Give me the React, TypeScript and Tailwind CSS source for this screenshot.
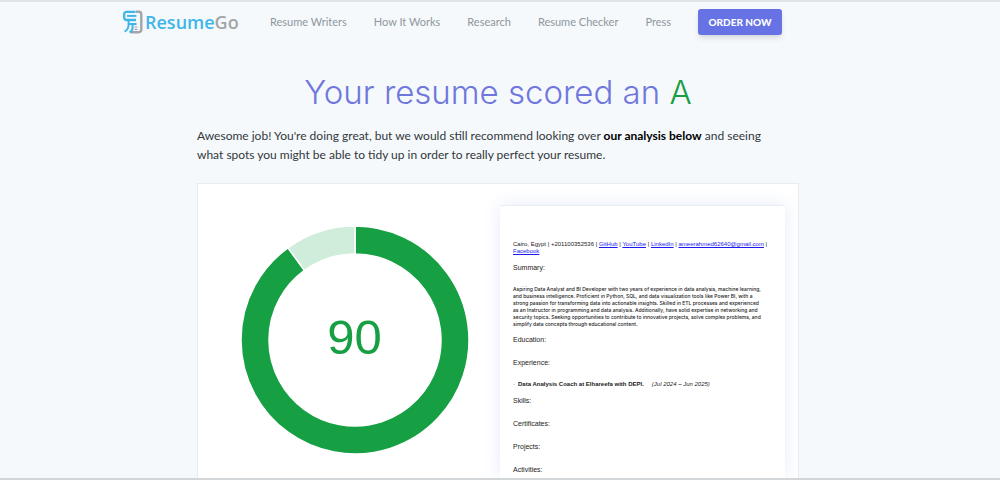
import { ReactNode } from "react";

const navLinks = ["Resume Writers", "How It Works", "Research", "Resume Checker", "Press"];

const contactLinks = ["GitHub", "YouTube", "LinkedIn", "ameerahmed62640@gmail.com", "Facebook"];

function LogoMark() {
  return (
    <svg viewBox="0 0 20 24" className="h-6 w-5" fill="none" aria-hidden="true">
      <path d="M13 1.8h2.7a2.6 2.6 0 0 1 2.6 2.6v15.2a2.6 2.6 0 0 1-2.6 2.6H7.8" stroke="#a3a5a8" strokeWidth="2.4" />
      <path d="M11.5 17h3M11.5 19.4h3" stroke="#a3a5a8" strokeWidth="1.2" />
      <path d="M12.6 1.8H3.4A2.2 2.2 0 0 0 1.2 4v3.8A2.2 2.2 0 0 0 3.4 10H13" stroke="#3fb6e8" strokeWidth="2.3" />
      <path d="M4 5.9h9.4" stroke="#3fb6e8" strokeWidth="2" />
      <path d="M5.6 10v4.4c0 3.6-1.2 5.6-4 7.2M5.6 14h8M9.6 14v3.4c0 2.4-1 4-3.2 5" stroke="#3fb6e8" strokeWidth="2" />
    </svg>
  );
}

function Header() {
  return (
    <header className="mx-auto flex w-full max-w-[750px] items-center pt-[7px]">
      <a href="#" className="flex w-[120px] items-center gap-[2px]">
        <LogoMark />
        <span className="font-['Open_Sans',sans-serif] text-[18px] leading-[26px] font-semibold text-[#3fb6e8]">
          Resume<span className="text-[#a3a5a8]">Go</span>
        </span>
      </a>
      <nav className="ml-[27px] flex items-center gap-[27px]">
        {navLinks.map((label) => (
          <a key={label} href="#" className="text-[11px] leading-[18px] whitespace-nowrap text-[#8f979d]">
            {label}
          </a>
        ))}
        <button
          type="button"
          className="h-[26px] w-[84px] rounded-[3px] bg-[#6772e5] text-[10px] font-black whitespace-nowrap text-white shadow-md"
        >
          ORDER NOW
        </button>
      </nav>
    </header>
  );
}

function point(radius: number, angle: number) {
  const rad = ((angle - 90) * Math.PI) / 180;
  return `${115 + radius * Math.cos(rad)} ${115 + radius * Math.sin(rad)}`;
}

function slice(from: number, to: number) {
  const large = to - from > 180 ? 1 : 0;
  return `M${point(114, from)} A114 114 0 ${large} 1 ${point(114, to)} L${point(86, to)} A86 86 0 ${large} 0 ${point(86, from)} Z`;
}

function ScoreChart({ score }: { score: number }) {
  const end = score * 3.6;

  return (
    <div className="grid place-items-center">
      <svg viewBox="0 0 230 230" className="col-start-1 row-start-1 size-[230px]" aria-hidden="true">
        <path d={slice(0, end)} fill="#169f43" stroke="#fff" strokeWidth="1.5" />
        <path d={slice(end, 360)} fill="#d0ecda" stroke="#fff" strokeWidth="1.5" />
      </svg>
      <span className="col-start-1 row-start-1 pb-[6px] font-['Liberation_Sans',sans-serif] text-[49px] leading-none text-[#169f43]">
        {score}
      </span>
    </div>
  );
}

function SectionTitle({ children }: { children: ReactNode }) {
  return <h2 className="text-[7px] leading-[9px]">{children}</h2>;
}

function ResumePreview() {
  return (
    <article className="w-[285px] border-t border-[#e8eef5] bg-white pt-[35px] pl-[13px] font-['Liberation_Sans',Arial,sans-serif] text-[6px] leading-[7px] text-[#222] shadow-[0_0_16px_rgba(80,110,220,0.14)]">
      <p className="pr-[16px]">
        Cairo, Egypt | +201100352536
        {contactLinks.map((label) => (
          <span key={label}>
            {" | "}
            <a href="#" className="text-[#1a1aee] underline">
              {label}
            </a>
          </span>
        ))}
      </p>
      <div className="mt-[8px]">
        <SectionTitle>Summary:</SectionTitle>
      </div>
      <p className="mt-[14px] font-['Inter',sans-serif] text-[5px] leading-[7px] font-medium whitespace-nowrap">
        Aspiring Data Analyst and BI Developer with two years of experience in data analysis, machine learning,
        <br />
        and business intelligence. Proficient in Python, SQL, and data visualization tools like Power BI, with a
        <br />
        strong passion for transforming data into actionable insights. Skilled in ETL processes and experienced
        <br />
        as an Instructor in programming and data analysis. Additionally, have solid expertise in networking and
        <br />
        security topics. Seeking opportunities to contribute to innovative projects, solve complex problems, and
        <br />
        simplify data concepts through educational content.
      </p>
      <div className="mt-[7px] space-y-[14px]">
        <SectionTitle>Education:</SectionTitle>
        <SectionTitle>Experience:</SectionTitle>
      </div>
      <p className="mt-[14px] flex">
        <span className="w-[5px] text-[#999]">-</span>
        <b>Data Analysis Coach at Elhareefa with DEPI.</b>
        <i className="ml-[8px]">(Jul 2024 – Jun 2025)</i>
      </p>
      <div className="mt-[8px] space-y-[14px]">
        <SectionTitle>Skills:</SectionTitle>
        <SectionTitle>Certificates:</SectionTitle>
        <SectionTitle>Projects:</SectionTitle>
        <SectionTitle>Activities:</SectionTitle>
      </div>
    </article>
  );
}

export default function App() {
  return (
    <div className="flex h-screen flex-col overflow-hidden border-t-2 border-b-2 border-t-[#e1e4e5] border-b-[#d3d6d8] bg-[#f5f9fc] pr-1 font-['Lato',sans-serif]">
      <Header />
      <main className="mx-auto flex min-h-0 w-full max-w-[602px] flex-1 flex-col">
        <h1 className="mt-[33px] text-center font-['Inter','Lato',sans-serif] text-[33px] leading-[48px] font-light text-[#6f77dc]">
          Your resume scored an <span className="text-[#169f43]">A</span>
        </h1>
        <p className="mt-[10px] pr-[20px] text-[12px] leading-[19px] text-[#32373b]">
          Awesome job! You're doing great, but we would still recommend looking over{" "}
          <strong className="font-bold text-black">our analysis below</strong> and seeing what spots you might be able
          to tidy up in order to really perfect your resume.
        </p>
        <section className="mt-[19px] flex flex-1 border border-b-0 border-[#e6edf2] bg-white pt-[21px] pr-[13px]">
          <div className="flex flex-1 items-start justify-center pt-[20px] pl-[11px]">
            <ScoreChart score={90} />
          </div>
          <ResumePreview />
        </section>
      </main>
    </div>
  );
}
